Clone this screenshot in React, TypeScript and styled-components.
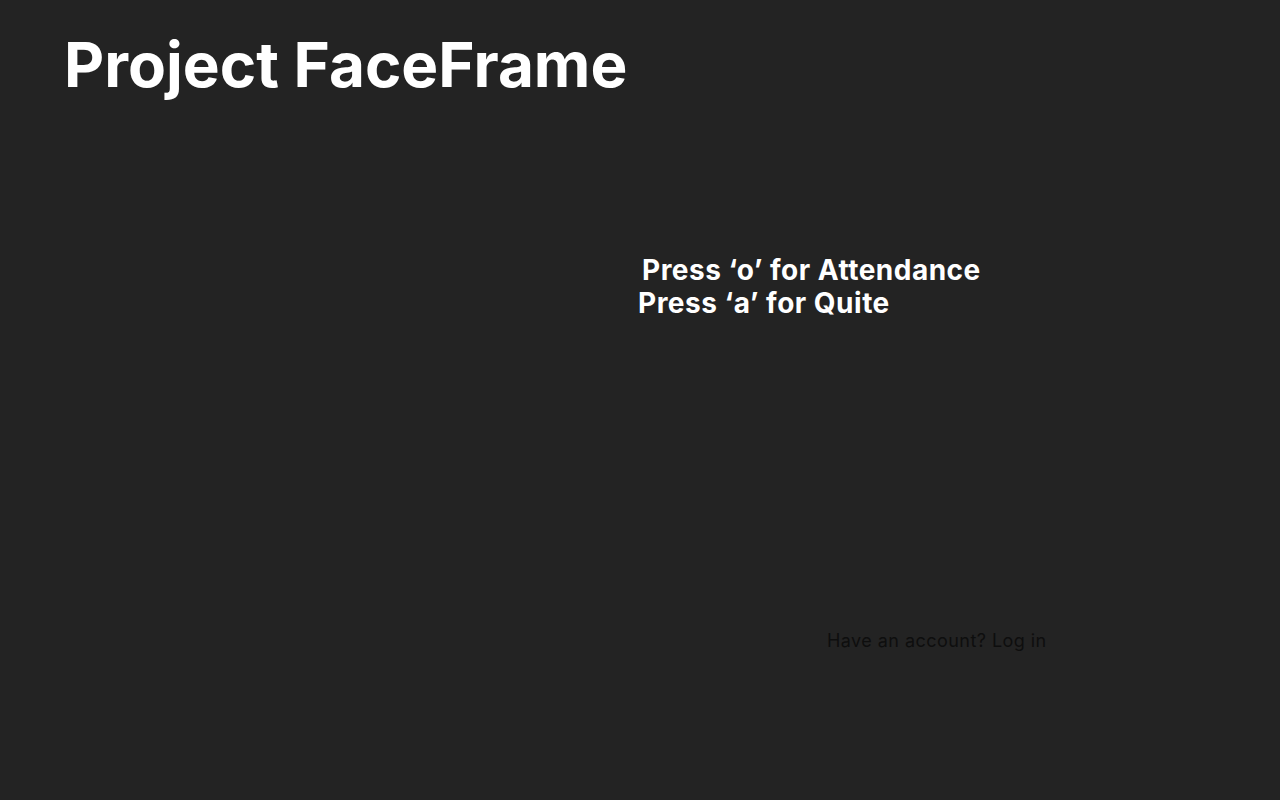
import styled, { createGlobalStyle } from "styled-components";

const GlobalStyle = createGlobalStyle`
  html, body {
    margin: 0;
    padding: 0;
    background: #232323;
  }
  body {
    font-family: Inter, "Open Sans", sans-serif;
  }
`;

const Page = styled.div`
  width: 1280px;
  height: 800px;
  background: #232323;
  display: flex;
  flex-direction: column;
  box-sizing: border-box;
  padding: 27px 0 0 64px;
`;

const Title = styled.h1`
  margin: 0;
  font-family: Inter, sans-serif;
  font-weight: 700;
  font-size: 62px;
  line-height: 76px;
  letter-spacing: 0;
  color: #ffffff;
`;

const Main = styled.div`
  display: grid;
  grid-template-columns: 574px 1fr;
  flex: 1;
`;

const Feed = styled.div``;

const Side = styled.div`
  display: flex;
  flex-direction: column;
  padding-top: 151px;
`;

const Hint = styled.p<{ $indent?: number }>`
  margin: 0;
  padding-left: ${(p) => p.$indent ?? 0}px;
  font-family: Inter, sans-serif;
  font-weight: 700;
  font-size: 28px;
  line-height: 33px;
  letter-spacing: 0.5px;
  color: #ffffff;
`;

const Login = styled.p`
  margin: 310px 0 0 189px;
  font-family: Inter, sans-serif;
  font-size: 18px;
  line-height: 22px;
  letter-spacing: 0.45px;
  color: #0e0e0e;
`;

export default function App() {
  return (
    <>
      <GlobalStyle />
      <Page>
        <Title>Project FaceFrame</Title>
        <Main>
          <Feed />
          <Side>
            <Hint $indent={4}>Press ‘o’ for Attendance</Hint>
            <Hint>Press ‘a’ for Quite</Hint>
            <Login>Have an account? Log in</Login>
          </Side>
        </Main>
      </Page>
    </>
  );
}
